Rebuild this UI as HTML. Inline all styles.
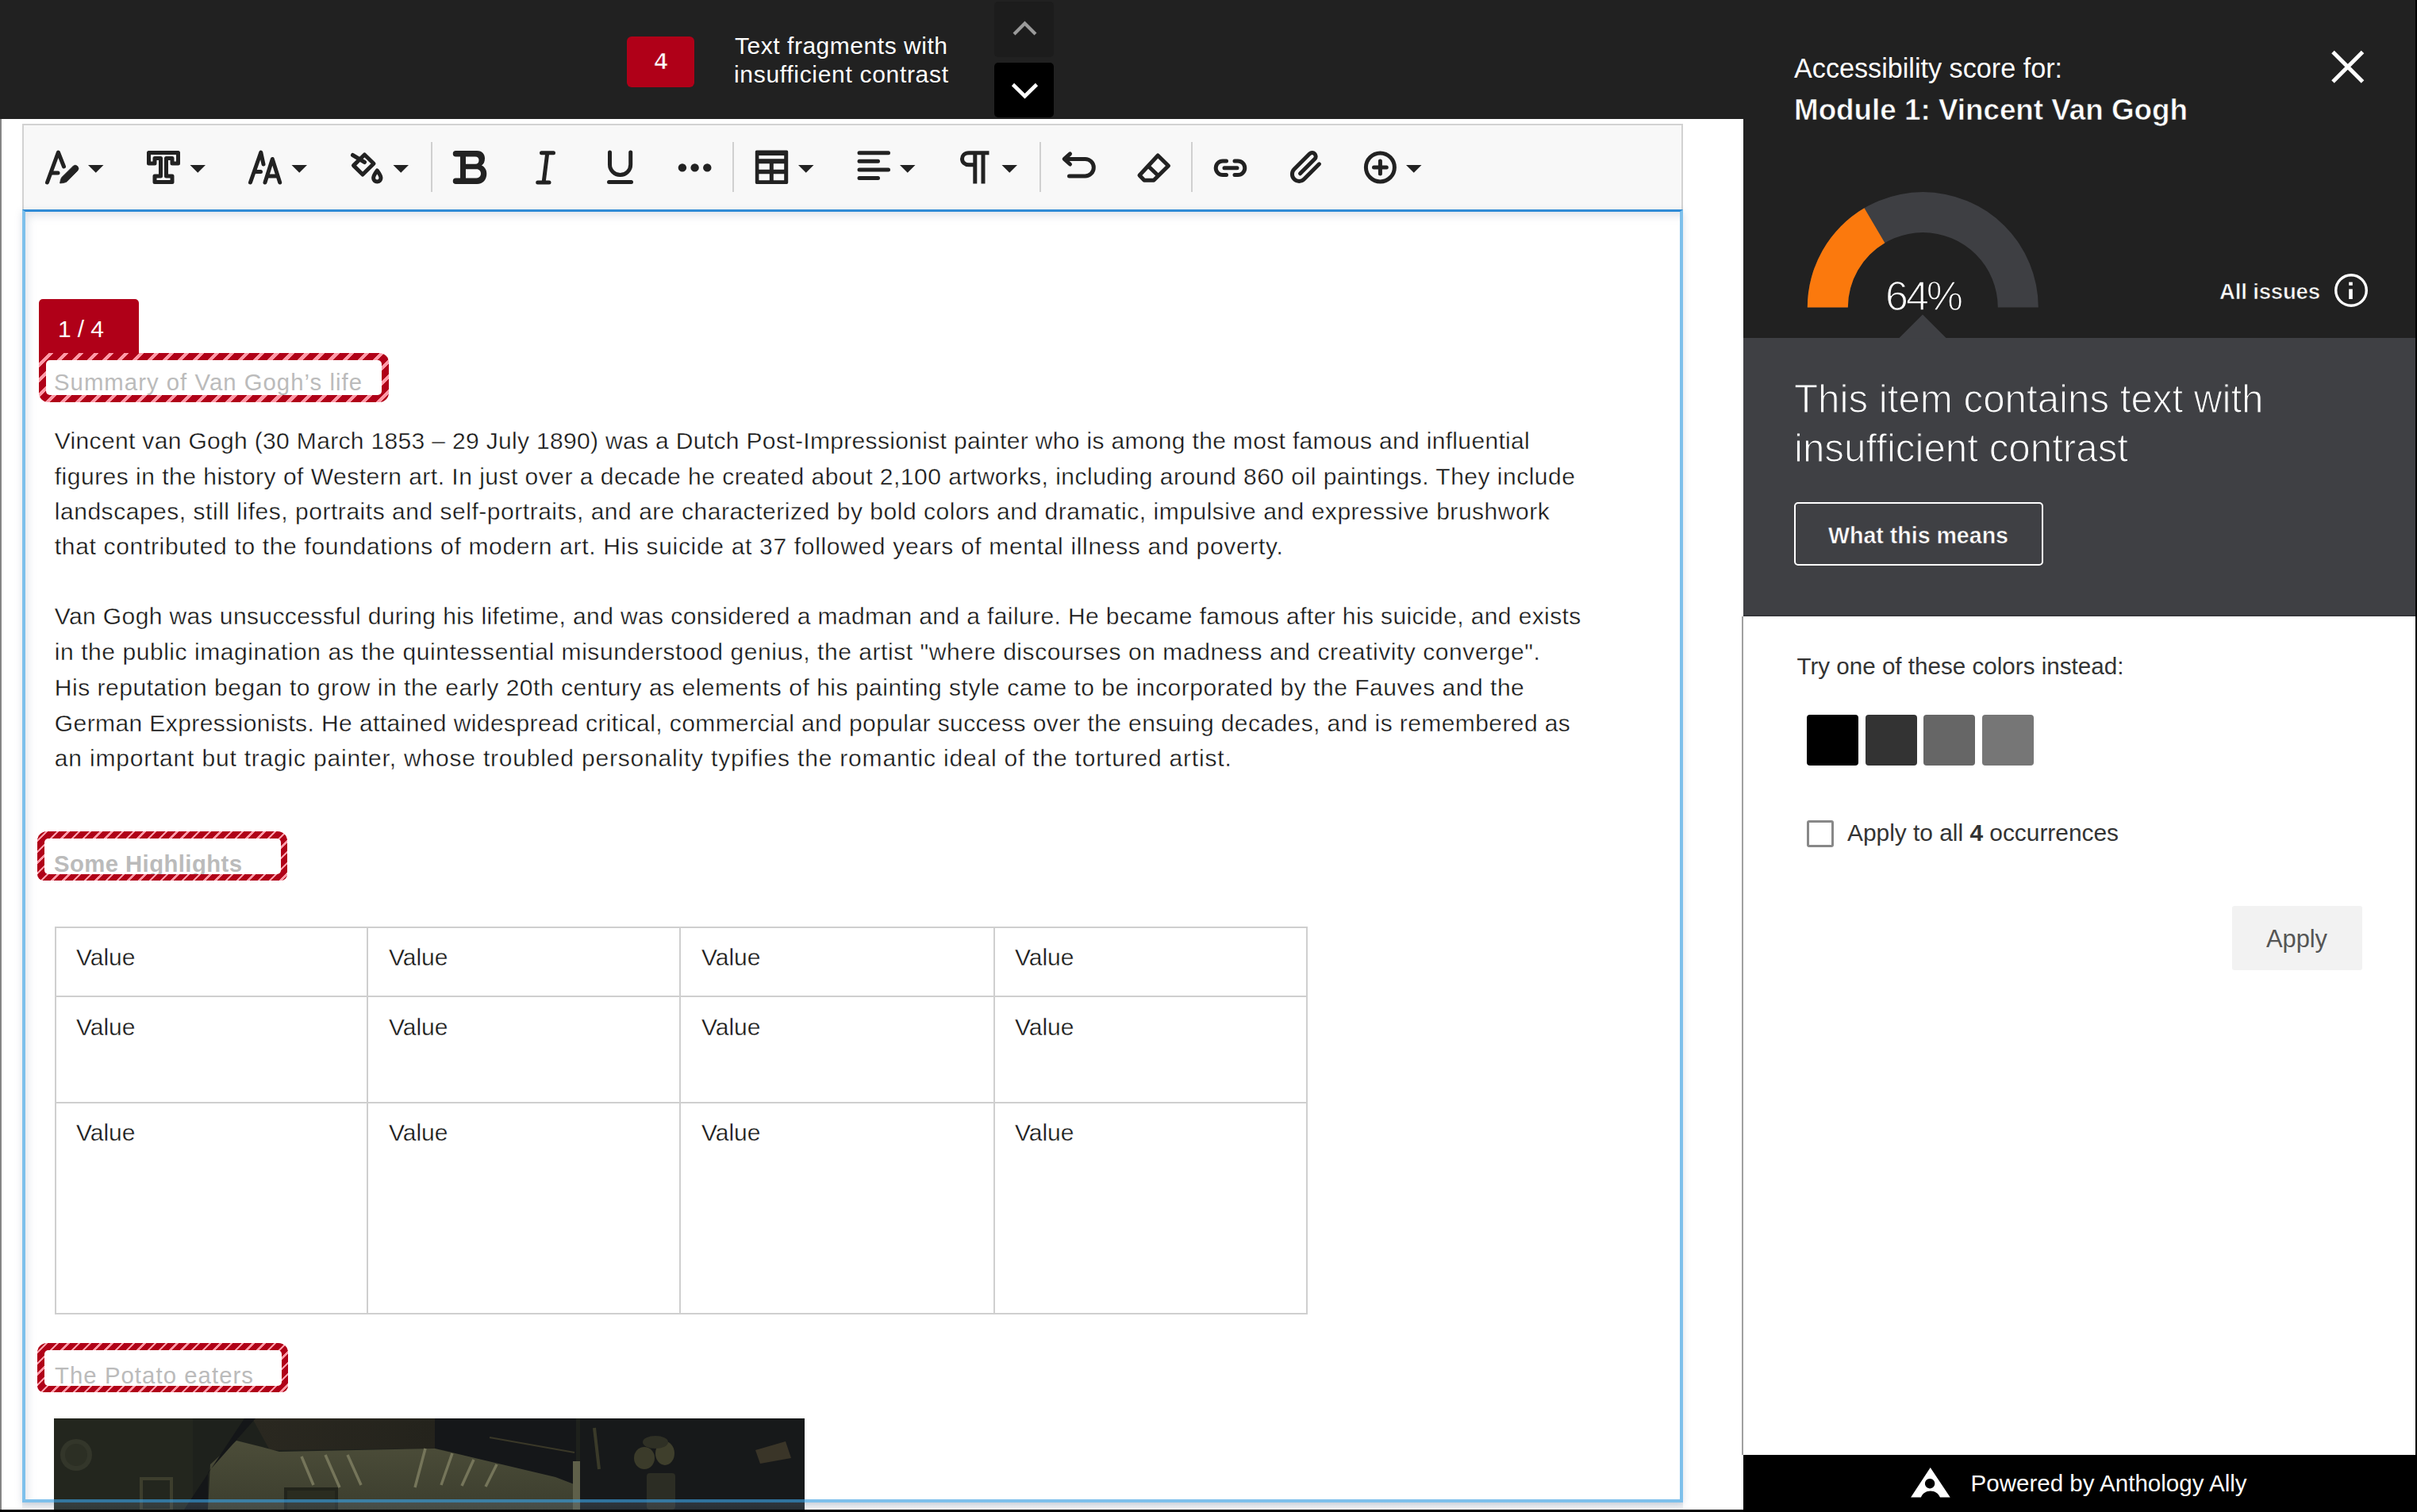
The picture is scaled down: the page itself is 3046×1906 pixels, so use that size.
<!DOCTYPE html><html><head><meta charset="utf-8"><style>
html,body{margin:0;padding:0}body{width:3046px;height:1906px;position:relative;overflow:hidden;background:#fff;font-family:"Liberation Sans",sans-serif}
.a{position:absolute}.t{position:absolute;white-space:pre;font-family:"Liberation Sans",sans-serif}
</style></head><body>
<div class="a" style="left:0px;top:0px;width:3046px;height:1906px;background:#fff"></div>
<div class="a" style="left:0px;top:150px;width:2px;height:1756px;background:#858585"></div>
<div class="a" style="left:0px;top:0px;width:2197px;height:150px;background:#212121"></div>
<div class="a" style="left:790px;top:46px;width:85px;height:64px;background:#b00018;border-radius:6px"></div>
<div class="t" style="left:824.5px;top:61.61px;font-size:30px;line-height:30px;letter-spacing:0.000px;color:#fff;font-weight:bold;-webkit-text-stroke:0.7px #b00018;">4</div>
<div class="t" style="left:926.0px;top:42.61px;font-size:30px;line-height:30px;letter-spacing:0.531px;color:#fff;">Text fragments with</div>
<div class="t" style="left:925.0px;top:78.61px;font-size:30px;line-height:30px;letter-spacing:0.688px;color:#fff;">insufficient contrast</div>
<div class="a" style="left:1253px;top:2px;width:75px;height:70px;background:#1c1c1c;border-radius:5px"></div>
<div class="a" style="left:1253px;top:79px;width:75px;height:69px;background:#000;border-radius:5px"></div>
<div class="a" style="left:28px;top:156px;width:2093px;height:110px;background:#f8f8f8;border:2px solid #d2d2d2;border-bottom:none;box-sizing:border-box"></div>
<div class="a" style="left:28px;top:264px;width:2093px;height:1630px;box-shadow:0 3px 9px rgba(90,110,140,.22)"></div>
<div class="a" style="left:28px;top:264px;width:2093px;height:1630px;background:#fff"></div>
<div class="a" style="left:32px;top:267px;width:2085px;height:1623px;box-shadow:inset 8px 10px 12px -6px rgba(100,120,150,.22)"></div>
<div class="a" style="left:49px;top:377px;width:126px;height:80px;background:#b00018;border-radius:5px 5px 0 0"></div>
<div class="t" style="left:73.0px;top:399.61px;font-size:30px;line-height:30px;letter-spacing:-0.094px;color:#fff;">1 / 4</div>
<div class="a" style="left:49px;top:445px;width:441px;height:62px;background:repeating-linear-gradient(135deg,#b00018 0px,#b00018 9.0px,#ff9aa8 9.0px,#ff9aa8 13.4px);border-radius:0 12px 12px 12px"></div>
<div class="a" style="left:58px;top:454px;width:423px;height:44px;background:#fff;border-radius:5px"></div>
<div class="t" style="left:68.0px;top:466.50px;font-size:29.3px;line-height:29.3px;letter-spacing:1.038px;color:#bbb;">Summary of Van Gogh’s life</div>
<div class="t" style="left:68.8px;top:540.90px;font-size:30px;line-height:30px;letter-spacing:0.335px;color:#161616;-webkit-text-stroke:0.35px #fff;">Vincent van Gogh (30 March 1853 – 29 July 1890) was a Dutch Post-Impressionist painter who is among the most famous and influential</div>
<div class="t" style="left:68.8px;top:585.81px;font-size:30px;line-height:30px;letter-spacing:0.492px;color:#161616;-webkit-text-stroke:0.35px #fff;">figures in the history of Western art. In just over a decade he created about 2,100 artworks, including around 860 oil paintings. They include</div>
<div class="t" style="left:68.8px;top:629.81px;font-size:30px;line-height:30px;letter-spacing:0.526px;color:#161616;-webkit-text-stroke:0.35px #fff;">landscapes, still lifes, portraits and self-portraits, and are characterized by bold colors and dramatic, impulsive and expressive brushwork</div>
<div class="t" style="left:68.8px;top:674.11px;font-size:30px;line-height:30px;letter-spacing:0.673px;color:#161616;-webkit-text-stroke:0.35px #fff;">that contributed to the foundations of modern art. His suicide at 37 followed years of mental illness and poverty.</div>
<div class="t" style="left:68.8px;top:762.40px;font-size:30px;line-height:30px;letter-spacing:0.393px;color:#161616;-webkit-text-stroke:0.35px #fff;">Van Gogh was unsuccessful during his lifetime, and was considered a madman and a failure. He became famous after his suicide, and exists</div>
<div class="t" style="left:68.8px;top:807.31px;font-size:30px;line-height:30px;letter-spacing:0.557px;color:#161616;-webkit-text-stroke:0.35px #fff;">in the public imagination as the quintessential misunderstood genius, the artist "where discourses on madness and creativity converge".</div>
<div class="t" style="left:68.8px;top:852.21px;font-size:30px;line-height:30px;letter-spacing:0.521px;color:#161616;-webkit-text-stroke:0.35px #fff;">His reputation began to grow in the early 20th century as elements of his painting style came to be incorporated by the Fauves and the</div>
<div class="t" style="left:68.8px;top:897.00px;font-size:30px;line-height:30px;letter-spacing:0.410px;color:#161616;-webkit-text-stroke:0.35px #fff;">German Expressionists. He attained widespread critical, commercial and popular success over the ensuing decades, and is remembered as</div>
<div class="t" style="left:68.8px;top:940.50px;font-size:30px;line-height:30px;letter-spacing:0.808px;color:#161616;-webkit-text-stroke:0.35px #fff;">an important but tragic painter, whose troubled personality typifies the romantic ideal of the tortured artist.</div>
<div class="a" style="left:47px;top:1048px;width:315px;height:62px;background:repeating-linear-gradient(135deg,#b00018 0px,#b00018 7.299999999999999px,#ff9aa8 7.299999999999999px,#ff9aa8 9.7px);border-radius:12px"></div>
<div class="a" style="left:55.5px;top:1056.5px;width:298.0px;height:45.0px;background:#fff;border-radius:5px"></div>
<div class="t" style="left:68.0px;top:1074.20px;font-size:29.3px;line-height:29.3px;letter-spacing:0.419px;color:#bbb;font-weight:bold;">Some Highlights</div>
<div class="a" style="left:47px;top:1101.5px;width:315px;height:8.5px;overflow:hidden;border-radius:0 0 12px 12px"><div style="position:absolute;left:0;top:-53.5px;width:315px;height:62px;background:repeating-linear-gradient(135deg,#b00018 0px,#b00018 7.299999999999999px,#ff9aa8 7.299999999999999px,#ff9aa8 9.7px)"></div></div>
<div class="a" style="left:69px;top:1168px;width:1579px;height:489px;border:2px solid #cfcfcf;box-sizing:border-box"></div>
<div class="a" style="left:462px;top:1168px;width:2px;height:489px;background:#cfcfcf"></div>
<div class="a" style="left:856px;top:1168px;width:2px;height:489px;background:#cfcfcf"></div>
<div class="a" style="left:1252px;top:1168px;width:2px;height:489px;background:#cfcfcf"></div>
<div class="a" style="left:69px;top:1255px;width:1579px;height:2px;background:#cfcfcf"></div>
<div class="a" style="left:69px;top:1389px;width:1579px;height:2px;background:#cfcfcf"></div>
<div class="t" style="left:96.0px;top:1192.11px;font-size:30px;line-height:30px;letter-spacing:-0.004px;color:#161616;-webkit-text-stroke:0.35px #fff;">Value</div>
<div class="t" style="left:490.0px;top:1192.11px;font-size:30px;line-height:30px;letter-spacing:-0.004px;color:#161616;-webkit-text-stroke:0.35px #fff;">Value</div>
<div class="t" style="left:884.0px;top:1192.11px;font-size:30px;line-height:30px;letter-spacing:-0.004px;color:#161616;-webkit-text-stroke:0.35px #fff;">Value</div>
<div class="t" style="left:1279.0px;top:1192.11px;font-size:30px;line-height:30px;letter-spacing:-0.004px;color:#161616;-webkit-text-stroke:0.35px #fff;">Value</div>
<div class="t" style="left:96.0px;top:1280.11px;font-size:30px;line-height:30px;letter-spacing:-0.004px;color:#161616;-webkit-text-stroke:0.35px #fff;">Value</div>
<div class="t" style="left:490.0px;top:1280.11px;font-size:30px;line-height:30px;letter-spacing:-0.004px;color:#161616;-webkit-text-stroke:0.35px #fff;">Value</div>
<div class="t" style="left:884.0px;top:1280.11px;font-size:30px;line-height:30px;letter-spacing:-0.004px;color:#161616;-webkit-text-stroke:0.35px #fff;">Value</div>
<div class="t" style="left:1279.0px;top:1280.11px;font-size:30px;line-height:30px;letter-spacing:-0.004px;color:#161616;-webkit-text-stroke:0.35px #fff;">Value</div>
<div class="t" style="left:96.0px;top:1413.11px;font-size:30px;line-height:30px;letter-spacing:-0.004px;color:#161616;-webkit-text-stroke:0.35px #fff;">Value</div>
<div class="t" style="left:490.0px;top:1413.11px;font-size:30px;line-height:30px;letter-spacing:-0.004px;color:#161616;-webkit-text-stroke:0.35px #fff;">Value</div>
<div class="t" style="left:884.0px;top:1413.11px;font-size:30px;line-height:30px;letter-spacing:-0.004px;color:#161616;-webkit-text-stroke:0.35px #fff;">Value</div>
<div class="t" style="left:1279.0px;top:1413.11px;font-size:30px;line-height:30px;letter-spacing:-0.004px;color:#161616;-webkit-text-stroke:0.35px #fff;">Value</div>
<div class="a" style="left:47px;top:1693px;width:316px;height:62px;background:repeating-linear-gradient(135deg,#b00018 0px,#b00018 7.299999999999999px,#ff9aa8 7.299999999999999px,#ff9aa8 9.7px);border-radius:12px"></div>
<div class="a" style="left:55.5px;top:1701.5px;width:299.0px;height:45.0px;background:#fff;border-radius:5px"></div>
<div class="t" style="left:69.0px;top:1718.80px;font-size:29.3px;line-height:29.3px;letter-spacing:1.069px;color:#bbb;">The Potato eaters</div>
<div class="a" style="left:47px;top:1746.5px;width:316px;height:8.5px;overflow:hidden;border-radius:0 0 12px 12px"><div style="position:absolute;left:0;top:-53.5px;width:316px;height:62px;background:repeating-linear-gradient(135deg,#b00018 0px,#b00018 7.299999999999999px,#ff9aa8 7.299999999999999px,#ff9aa8 9.7px)"></div></div>
<svg class="a" style="left:68px;top:1788px" width="946" height="115" viewBox="68 1788 946 115">
<defs><linearGradient id="pg1" x1="0" y1="0" x2="0" y2="1"><stop offset="0" stop-color="#4c4d39"/><stop offset="1" stop-color="#3c3e2e"/></linearGradient>
<linearGradient id="pg2" x1="0" y1="0" x2="1" y2="0"><stop offset="0" stop-color="#2a2820"/><stop offset="1" stop-color="#24231c"/></linearGradient></defs>
<rect x="68" y="1788" width="946" height="115" fill="#1e211c"/>
<rect x="68" y="1788" width="175" height="115" fill="#23261e"/>
<circle cx="96" cy="1834" r="20" fill="#33362a"/>
<circle cx="96" cy="1834" r="14" fill="#2c2f24"/>
<rect x="178" y="1864" width="38" height="40" fill="none" stroke="#3d3e2d" stroke-width="4"/>
<path d="M318,1788 L548,1788 L548,1826 L340,1828 Z" fill="url(#pg2)"/><path d="M548,1788 L726,1788 L726,1872 L560,1828 L548,1826 Z" fill="#151719"/><path d="M617,1812 L724,1831" stroke="#3a3828" stroke-width="2"/>
<path d="M265,1846 L298,1816 L330,1824 L352,1830 L548,1826 L700,1862 L726,1872 L726,1903 L262,1903 Z" fill="url(#pg1)"/>
<path d="M308,1788 L322,1788 L262,1856 L262,1903 L232,1903 Z" fill="#141618"/>

<path d="M380,1836 L395,1872 M410,1834 L428,1875 M438,1834 L455,1872 M536,1826 L523,1875 M570,1832 L556,1872 M597,1840 L582,1873 M626,1846 L612,1874" stroke="#75755a" stroke-width="3.5"/>
<rect x="360" y="1877" width="64" height="30" fill="#2a2c20" stroke="#22241b" stroke-width="4"/>
<rect x="722" y="1842" width="9" height="62" fill="#5f604a"/>
<rect x="731" y="1788" width="283" height="115" fill="#17191a"/>
<ellipse cx="812" cy="1838" rx="13" ry="14" fill="#3b3b2a"/><ellipse cx="838" cy="1832" rx="12" ry="15" fill="#3f3f2c"/><ellipse cx="826" cy="1818" rx="16" ry="8" fill="#2f3025"/><path d="M749,1800 L755,1852" stroke="#3a3a29" stroke-width="4"/>
<path d="M952,1828 L990,1817 L997,1838 L958,1845 Z" fill="#3a3528"/>
<rect x="815" y="1857" width="36" height="46" rx="4" fill="#2c2d24"/>
<rect x="68" y="1894" width="946" height="9" fill="#6a8090" fill-opacity=".18"/>
</svg>
<div class="a" style="left:28px;top:264px;width:2093px;height:1630px;border:4px solid rgba(60,160,225,.66);border-top:3px solid #2f8bd6;box-sizing:border-box"></div>
<div class="a" style="left:28px;top:1894px;width:2093px;height:9px;background:linear-gradient(rgba(90,110,140,.16),rgba(90,110,140,.06))"></div>
<div class="a" style="left:2197px;top:0px;width:849px;height:426px;background:#212121"></div>
<div class="a" style="left:2197px;top:426px;width:849px;height:351px;background:#3f4044;border-bottom:2px solid #35363a;box-sizing:border-box"></div>
<div class="a" style="left:2195px;top:777px;width:851px;height:1057px;background:#fff;border-left:2px solid #a0a0a0;box-sizing:border-box"></div>
<div class="a" style="left:2197px;top:1834px;width:849px;height:72px;background:#000"></div>
<div class="a" style="left:3044px;top:0px;width:2px;height:1906px;background:#000"></div>
<div class="a" style="left:0px;top:1903px;width:3046px;height:3px;background:#000"></div>
<div class="t" style="left:2261.0px;top:69.05px;font-size:34.2px;line-height:34.2px;letter-spacing:-0.007px;color:#fff;">Accessibility score for:</div>
<div class="t" style="left:2261.0px;top:120.85px;font-size:36.8px;line-height:36.8px;letter-spacing:-0.006px;color:#fff;font-weight:bold;-webkit-text-stroke:0.6px #212121;">Module 1: Vincent Van Gogh</div>
<div class="t" style="left:2376.0px;top:347.48px;font-size:52px;line-height:52px;letter-spacing:-3.039px;color:#fff;-webkit-text-stroke:1.3px #212121;">64%</div>
<div class="t" style="left:2797.0px;top:353.72px;font-size:27.5px;line-height:27.5px;letter-spacing:-0.156px;color:#fff;font-weight:bold;-webkit-text-stroke:0.6px #212121;">All issues</div>
<div class="t" style="left:2261.0px;top:477.97px;font-size:49.3px;line-height:49.3px;letter-spacing:-0.010px;color:#fff;-webkit-text-stroke:1.2px #3f4044;">This item contains text with</div>
<div class="t" style="left:2261.0px;top:539.87px;font-size:49.3px;line-height:49.3px;letter-spacing:-0.004px;color:#fff;-webkit-text-stroke:1.2px #3f4044;">insufficient contrast</div>
<div class="a" style="left:2261px;top:633px;width:314px;height:80px;border:2px solid #fff;border-radius:5px;box-sizing:border-box"></div>
<div class="t" style="left:2304.0px;top:661.29px;font-size:28.6px;line-height:28.6px;letter-spacing:-0.015px;color:#fff;font-weight:bold;-webkit-text-stroke:0.5px #3f4044;">What this means</div>
<div class="t" style="left:2264.4px;top:824.94px;font-size:29.6px;line-height:29.6px;letter-spacing:0.007px;color:#333;">Try one of these colors instead:</div>
<div class="a" style="left:2277px;top:901px;width:65px;height:64px;background:#000;border-radius:4px"></div>
<div class="a" style="left:2350.5px;top:901px;width:65px;height:64px;background:#333;border-radius:4px"></div>
<div class="a" style="left:2424px;top:901px;width:65px;height:64px;background:#666;border-radius:4px"></div>
<div class="a" style="left:2498px;top:901px;width:65px;height:64px;background:#767676;border-radius:4px"></div>
<div class="a" style="left:2277px;top:1034px;width:34px;height:34px;border:3px solid #888;border-radius:3px;box-sizing:border-box"></div>
<div class="t" style="left:2328.0px;top:1034.69px;font-size:29.9px;line-height:29.9px;letter-spacing:-0.011px;color:#333;">Apply to all <b>4</b> occurrences</div>
<div class="a" style="left:2813px;top:1142px;width:164px;height:81px;background:#f2f2f2;border-radius:3px"></div>
<div class="t" style="left:2856.0px;top:1168.93px;font-size:30.8px;line-height:30.8px;letter-spacing:-0.012px;color:#555;">Apply</div>
<div class="t" style="left:2483.6px;top:1855.03px;font-size:29.5px;line-height:29.5px;letter-spacing:0.014px;color:#fff;">Powered by Anthology Ally</div>
<svg class="a" style="left:0;top:0" width="3046" height="1906" viewBox="0 0 3046 1906"><path d="M111,208 L130.5,208 L120.75,217.8 Z" fill="#222"/><path d="M239.5,208 L259.0,208 L249.25,217.8 Z" fill="#222"/><path d="M367.5,208 L387.0,208 L377.25,217.8 Z" fill="#222"/><path d="M495.5,208 L515.0,208 L505.25,217.8 Z" fill="#222"/><path d="M1006,208 L1025.5,208 L1015.75,217.8 Z" fill="#222"/><path d="M1134,208 L1153.5,208 L1143.75,217.8 Z" fill="#222"/><path d="M1262.5,208 L1282.0,208 L1272.25,217.8 Z" fill="#222"/><path d="M1772,208 L1791.5,208 L1781.75,217.8 Z" fill="#222"/><rect x="543" y="179" width="2" height="63" fill="#d0d0d0"/><rect x="923" y="179" width="2" height="63" fill="#d0d0d0"/><rect x="1310" y="179" width="2" height="63" fill="#d0d0d0"/><rect x="1501" y="179" width="2" height="63" fill="#d0d0d0"/><path d="M59.5,230 L73.4,192 L80.5,210" fill="none" stroke="#222" stroke-width="5" stroke-linecap="round" stroke-linejoin="round"/><path d="M64.5,218 H73" fill="none" stroke="#222" stroke-width="5" stroke-width="4.5" stroke-linecap="round"/><path d="M92.1,209.4 Q95,206.8 97.7,209.6 Q100.3,212.5 97.8,215.2 L83.9,229.3 Q80,231 75.6,231 Q76,226.5 77.6,223.7 Z" fill="#222" stroke="#222" stroke-width="0.8" stroke-linejoin="round"/><path d="M187.5,192.5 H224.5 V206 H217 V199.5 H209.5 V222 H217 V229.5 H195 V222 H202.5 V199.5 H195 V206 H187.5 Z" fill="none" stroke="#222" stroke-width="5" stroke-linejoin="round"/><path d="M315.5,230 L328.8,192 L332,207" fill="none" stroke="#222" stroke-width="5" stroke-linecap="round" stroke-linejoin="round"/><path d="M321.5,216.5 H328.5" fill="none" stroke="#222" stroke-width="5" stroke-linecap="round"/><path d="M334,230 L343.3,200.5 L352.7,230 M337.5,222 H349.5" fill="none" stroke="#222" stroke-width="5" stroke-linecap="round" stroke-linejoin="round"/><path d="M459.4,195 L471,206.2 L457,220 L445.5,208.6 Z" fill="none" stroke="#222" stroke-width="5" stroke-linejoin="round"/><path d="M444.5,195.5 L459.5,204.5" fill="none" stroke="#222" stroke-width="5" stroke-linecap="round"/><path d="M475.3,215 C478.6,219.5 480,222.2 480,224.3 A4.7,4.7 0 0 1 470.6,224.3 C470.6,222.2 472,219.5 475.3,215 Z" fill="none" stroke="#222" stroke-width="5" stroke-width="4.5" stroke-linejoin="round"/><path fill-rule="evenodd" fill="#222" d="M574.5,190 H601 C608,190 611,195 611,199.5 C611,204 609.5,207 607,208.5 C611,210.5 613.3,214 613.3,219 C613.3,226 609,232 601,232 H574.5 A3.6,3.6 0 0 1 574.5,224.5 H580 V197.5 H574.5 A3.75,3.75 0 0 1 574.5,190 Z M587,197.5 H599 C602,197.5 603.5,199.5 603.5,202 C603.5,204.8 602,206.8 599,206.8 H587 Z M587,213.2 H600.5 C604,213.2 606,215.8 606,218.8 C606,221.8 604,224.4 600.5,224.4 H587 Z"/><path d="M682.5,192.8 H697.5 M689.5,195 L685.3,228.5" fill="none" stroke="#222" stroke-width="5" stroke-width="5.5" stroke-linecap="round"/><path d="M677.7,230 H692" fill="none" stroke="#222" stroke-width="5" stroke-width="4.5" stroke-linecap="round"/><path d="M768.5,192 V207.5 A13.1,13.1 0 0 0 794.7,207.5 V192" fill="none" stroke="#222" stroke-width="5" stroke-linecap="round"/><path d="M767.5,229.6 H795.5" fill="none" stroke="#222" stroke-width="5" stroke-linecap="round"/><circle cx="859.9" cy="211.4" r="5.2" fill="#222"/><circle cx="875.6" cy="211.4" r="5.2" fill="#222"/><circle cx="891.3" cy="211.4" r="5.2" fill="#222"/><path fill-rule="evenodd" fill="#222" d="M953.5,189.6 H991.5 Q993.2,189.6 993.2,191.3 V230.2 Q993.2,231.9 991.5,231.9 H953.5 Q951.8,231.9 951.8,230.2 V191.3 Q951.8,189.6 953.5,189.6 Z M956.4,195.9 H988.2 V200.2 H956.4 Z M956.4,206.2 H969.8 V213.8 H956.4 Z M974.8,206.2 H988.2 V213.8 H974.8 Z M956.4,219.2 H969.8 V227.3 H956.4 Z M974.8,219.2 H988.2 V227.3 H974.8 Z"/><path d="M1083,192.7 H1119.5 M1083,203.2 H1106.5 M1083,213.9 H1119.5 M1083,224.4 H1106.5" fill="none" stroke="#222" stroke-width="5" stroke-width="5.8" stroke-linecap="round"/><path d="M1246.5,192.8 H1221 C1215.5,192.8 1212.5,196.5 1212.5,200.3 C1212.5,204.5 1216,207.8 1221,207.8 H1228.8 M1228.8,193 V231.5 M1239,193 V231.5" fill="none" stroke="#222" stroke-width="5" stroke-linecap="butt" stroke-linejoin="round"/><path d="M1347.5,222 H1367.5 A10.8,10.8 0 0 0 1367.5,200.4 H1343" fill="none" stroke="#222" stroke-width="5" stroke-linecap="round"/><path d="M1348.5,194 L1341.2,200.4 L1348.5,207" fill="none" stroke="#222" stroke-width="5" stroke-width="5.5" stroke-linecap="round" stroke-linejoin="round"/><path d="M1459.2,196 L1472.5,209 L1454,227.3 H1442 L1436,221 Z M1447.5,209.8 L1461,222.8" fill="none" stroke="#222" stroke-width="5" stroke-width="4.8" stroke-linejoin="round"/><path d="M1545.5,203 H1541 A8.8,8.8 0 0 0 1541,220.6 H1545.5 M1556,203 H1560 A8.8,8.8 0 0 1 1560,220.6 H1556 M1543,211.8 H1559" fill="none" stroke="#222" stroke-width="5" stroke-width="5.2" stroke-linecap="round"/><path d="M1662.5,206.8 L1643.5,225.8 A8.8,8.8 0 0 1 1631,213.3 L1650.5,193.8 A4.6,4.6 0 0 1 1657,200.3 L1638.5,218.8" fill="none" stroke="#222" stroke-width="5" stroke-width="4.8" stroke-linecap="round" stroke-linejoin="round"/><circle cx="1739.4" cy="210.9" r="18" fill="none" stroke="#222" stroke-width="5" stroke-width="4.8"/><path d="M1731.5,211 H1747.3 M1739.4,203 V219" fill="none" stroke="#222" stroke-width="5" stroke-width="4.6" stroke-linecap="round"/><path d="M1278,43 L1291.5,29.5 L1305,43" fill="none" stroke="#9a9a9a" stroke-width="4.2"/><path d="M1276.5,106.5 L1291.5,121.2 L1306.5,106.5" fill="none" stroke="#fff" stroke-width="4.6"/><path d="M2940,65.5 L2977.5,103 M2977.5,65.5 L2940,103" fill="none" stroke="#fff" stroke-width="5"/><circle cx="2963" cy="366" r="19.3" fill="none" stroke="#fff" stroke-width="3.4"/><rect x="2960.2" y="355.6" width="4.6" height="4.2" fill="#fff"/><rect x="2960.2" y="364.4" width="4.6" height="12.6" fill="#fff"/><path d="M2277.80,387.60 A145.5,145.5 0 0 1 2568.80,387.60 L2517.80,387.60 A94.5,94.5 0 0 0 2328.80,387.60 Z" fill="#3e3f43"/><path d="M2277.80,387.60 A145.5,145.5 0 0 1 2349.45,262.23 L2375.34,306.18 A94.5,94.5 0 0 0 2328.80,387.60 Z" fill="#fb790d"/><path d="M2393,426.5 L2423,396.5 L2453,426.5 Z" fill="#3f4044"/><path fill-rule="evenodd" fill="#fff" d="M2432.7,1850 L2457.7,1887.6 H2445 C2443,1882.5 2438.5,1879.4 2432.9,1879.4 C2427.3,1879.4 2422.8,1882.5 2420.8,1887.6 H2408.1 Z M2432.1,1864 A6.2,6.2 0 1 0 2432.11,1864 Z"/></svg>
</body></html>
